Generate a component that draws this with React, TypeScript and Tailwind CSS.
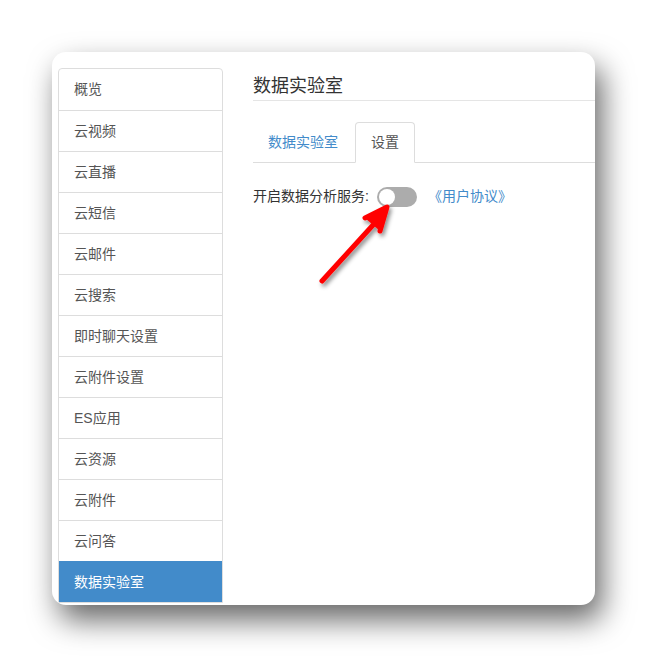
import { useState } from "react";

const menu = [
  "概览",
  "云视频",
  "云直播",
  "云短信",
  "云邮件",
  "云搜索",
  "即时聊天设置",
  "云附件设置",
  "ES应用",
  "云资源",
  "云附件",
  "云问答",
  "数据实验室",
];

const font = { fontFamily: '"Liberation Sans", "Noto Sans CJK SC", sans-serif' };

export default function App() {
  const [enabled, setEnabled] = useState(false);
  const active = "数据实验室";

  return (
    <div className="relative w-[647px] h-[657px] bg-white overflow-hidden" style={font}>
      <div className="ml-[52px] mt-[52px] w-[543px] h-[553px] bg-white rounded-[14px] overflow-hidden shadow-[7px_15px_30px_rgba(0,0,0,0.6)] flex pl-[6px] pt-[16px]">
        {/* sidebar */}
        <ul className="w-[165px] shrink-0 self-start border border-[#ddd] rounded-t-[4px] bg-white">
          {menu.map((item, i) => (
            <li
              key={item}
              className={`h-[41px] px-[15px] flex items-center text-[14px] ${
                i > 0 ? "border-t border-[#ddd]" : ""
              } ${item === active ? "bg-[#428bca] text-white border-t-[#428bca]" : "text-[#555]"}`}
            >
              {item}
            </li>
          ))}
        </ul>

        {/* content */}
        <div className="flex-1 ml-[30px] pt-[4px]">
          <h1 className="text-[18px] text-[#333] leading-[28px] border-b border-[#e5e5e5]">数据实验室</h1>

          <div className="mt-[21px] flex items-end border-b border-[#ddd] h-[41px]">
            <div className="h-[40px] px-[15px] flex items-center text-[14px] text-[#428bca] mr-[2px]">数据实验室</div>
            <div className="h-[41px] -mb-px px-[15px] flex items-center text-[14px] text-[#555] bg-white border border-[#ddd] border-b-white rounded-t-[4px]">
              设置
            </div>
          </div>

          <div className="mt-[23px] flex items-center text-[14px] text-[#333]">
            <span>开启数据分析服务:</span>
            <button
              onClick={() => setEnabled(!enabled)}
              className={`ml-[8px] w-[40px] h-[20px] rounded-full p-[2px] flex ${
                enabled ? "bg-[#428bca] justify-end" : "bg-[#acacac] justify-start"
              }`}
            >
              <span className="w-[16px] h-[16px] rounded-full bg-white" />
            </button>
            <a className="ml-[11px] text-[#428bca]">《用户协议》</a>
          </div>
        </div>
      </div>

      {/* annotation arrow */}
      <svg className="absolute left-0 top-0 pointer-events-none" width="647" height="657">
        <defs>
          <filter id="sh" x="-50%" y="-50%" width="200%" height="200%">
            <feDropShadow dx="2" dy="3" stdDeviation="2" floodColor="#000" floodOpacity="0.45" />
          </filter>
        </defs>
        <g filter="url(#sh)" fill="none" stroke="#ff0000" strokeWidth="5" strokeLinecap="round" strokeLinejoin="round">
          <line x1="322" y1="281" x2="384" y2="213" />
          <polyline points="365,218 387,207 380,231" fill="#ff0000" />
        </g>
      </svg>
    </div>
  );
}
